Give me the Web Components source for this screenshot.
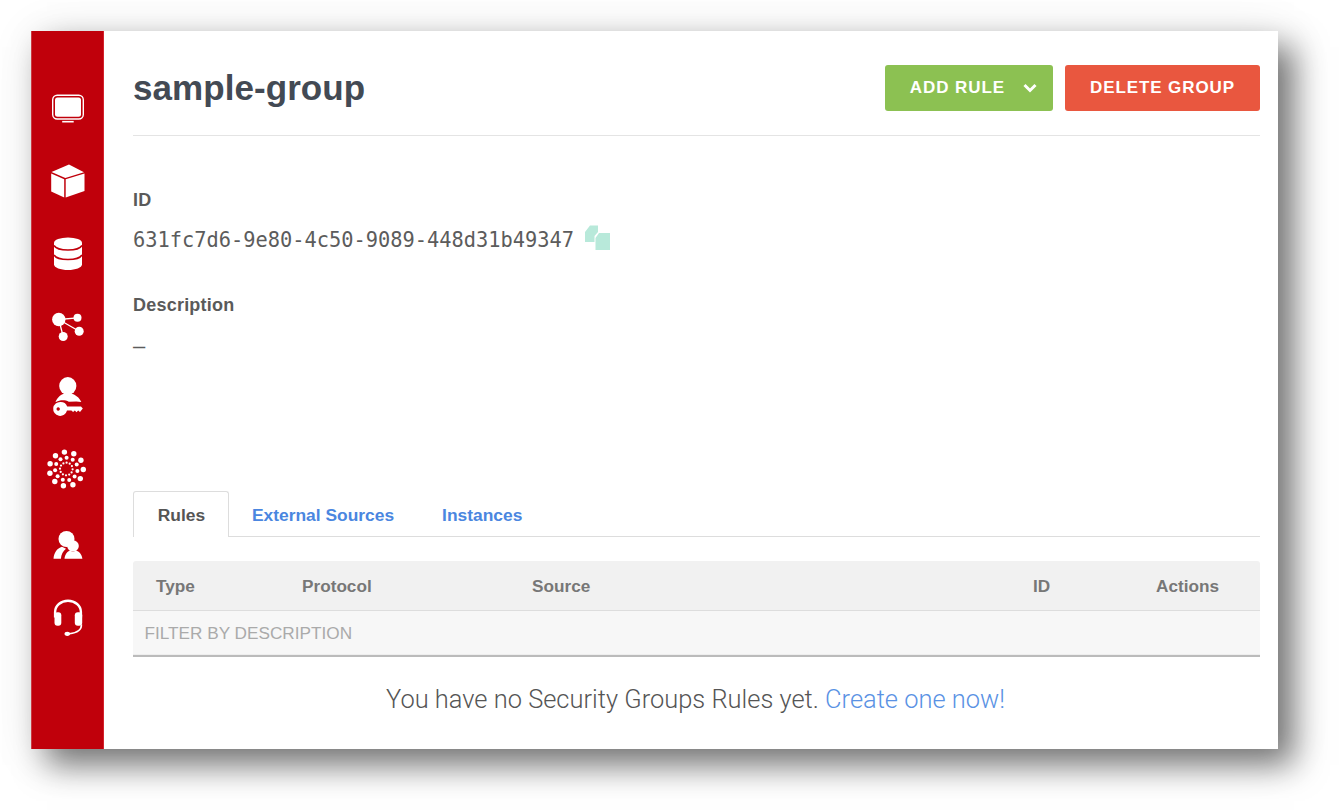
<!DOCTYPE html>
<html><head><meta charset="utf-8"><title>sample-group</title>
<style>
html,body{margin:0;padding:0;background:#fff}
body{font-family:"Liberation Sans",Arial,sans-serif;width:1340px;height:812px;overflow:hidden}
</style></head><body>
<app-window>
  <side-nav slot="nav"></side-nav>
  <page-header title-text="sample-group"></page-header>
  <info-field label="ID" mono copy>631fc7d6-9e80-4c50-9089-448d31b49347</info-field>
  <info-field label="Description" mono class="desc">–</info-field>
  <tab-bar></tab-bar>
  <rules-table></rules-table>
</app-window>
<script>
function shadow(el,html){el.attachShadow({mode:'open'}).innerHTML=html;}
customElements.define('app-window',class extends HTMLElement{constructor(){super();shadow(this,`<style>
:host{display:block;padding:31px 62px 63px 31px}
.win{display:flex;width:1247px;height:718px;background:#fff;box-shadow:16px 16px 30px rgba(0,0,0,.5),6px 6px 45px rgba(0,0,0,.12)}
.main{flex:1;min-width:0;padding:0 18px 0 29px;display:flex;flex-direction:column}
</style><div class="win"><slot name="nav"></slot><div class="main"><slot></slot></div></div>`);}});

const dots=(()=>{let s='';const cx=65.8,cy=468.5;
[[6.3,12,1.1,.1],[11.3,11,2,.3],[17,11,2.7,.05]].forEach(([r,n,d,o])=>{for(let i=0;i<n;i++){const a=(i+o)/n*2*Math.PI;
s+=`<circle cx="${(cx+r*Math.cos(a)).toFixed(1)}" cy="${(cy+r*Math.sin(a)).toFixed(1)}" r="${d}"/>`;}});return s;})();
const icons=[
[107.5,`<rect x="52.2" y="94.7" width="30.6" height="23.8" rx="4.5" fill="none" stroke="#fff" stroke-width="1.4"/><rect x="54.5" y="97" width="26" height="19.2" rx="2.5"/><rect x="61.700" y="120.4" width="11.5" height="1.6"/>`],
[180.5,`<path d="M68.5 164 83.5 171.7 64.8 177.6 51 171.6Z"/><path d="M50.7 173 63.7 178.7V197L50.7 191Z"/><path d="M65.2 178.8 84 172.9V190.6L65.2 197Z"/>`],
[253.5,`<ellipse cx="67.5" cy="242.5" rx="14" ry="5.500"/><path d="M53.500 242.500h28V264c0 3-6.500 5.500-14 5.500S53.500 267 53.500 264z"/><path d="M53.500 245c2 3.300 7.500 4.500 14 4.500s12-1.200 14-4.500M53.500 254.500c2 3.300 7.500 4.500 14 4.500s12-1.200 14-4.500" fill="none" stroke="#c0000b" stroke-width="1.500"/>`],
[326.5,`<circle cx="58.300" cy="319" r="6.700"/><circle cx="77" cy="317.300" r="4"/><circle cx="78.700" cy="330.700" r="4.500"/><circle cx="62.700" cy="336" r="4.500"/><path d="M58.300 319 77 317.300M58.300 319 78.700 330.700M58.300 319 62.700 336" stroke="#fff" stroke-width="1.300" fill="none"/>`],
[399.5,`<ellipse cx="67.300" cy="385.500" rx="8.600" ry="9"/><path d="M55 401.500c2-5 5.500-7.500 9-8.500h6.500c4 1 8.500 4 10.300 8.500l-5-.6-7.500.3c-3.500-1.800-8.800-2-12.800.300z"/><path fill-rule="evenodd" d="M60 401.500a7 7 0 0 1 6.700 4.400H80.500l1.800 2.200-2.800 3.400-1.800-1.400-1.700 1.600-1.700-1.600-1.700 1.500-1.700-1.500h-4.400a7 7 0 1 1-6.300-8.600zM57.700 406.800a1.700 1.700 0 1 0 .01 0z"/>`],
[472.5,dots],
[545.5,`<circle cx="66" cy="538.500" r="8"/><path d="M53 558.300c.5-6 3.500-10.500 8.500-12l4 2c-3 2.400-4.800 5.700-5.100 10z"/><circle cx="72.500" cy="545.500" r="5.800"/><path d="M64 558.300c.4-4.500 3-7.500 5.500-8.300l3 1.500 3-1.500c3 .8 6 3.800 6.400 8.300z"/>`],
[618.500,`<path d="M54.600 617v-5.500a12.900 11.300 0 0 1 25.800 0v5.500" fill="none" stroke="#fff" stroke-width="2.400"/><rect x="54" y="611.800" width="6.800" height="13.500" rx="3"/><rect x="74.300" y="611.800" width="7.400" height="13.500" rx="3"/><path d="M81 624c0 5.500-5 8.500-12 9.200" fill="none" stroke="#fff" stroke-width="1.500"/><ellipse cx="66.800" cy="633.300" rx="2.800" ry="2.100"/>`]
];
customElements.define('side-nav',class extends HTMLElement{constructor(){super();shadow(this,`<style>
:host{display:block;flex:none;width:73px;background:#c0000b;box-shadow:inset 1px 0 #cb3a42,inset -1px 0 #d4222c}
.list{display:flex;flex-direction:column;padding-top:40px}
.item{height:73px;display:flex;align-items:center;justify-content:center}
svg{width:40px;height:40px;fill:#fff;display:block;overflow:visible}
</style><nav class="list">${icons.map(([cy,b])=>`<div class="item"><svg viewBox="47.500 ${cy-20} 40 40">${b}</svg></div>`).join('')}</nav>`);}});

customElements.define('action-button',class extends HTMLElement{constructor(){super();shadow(this,`<style>
:host{display:inline-flex;align-items:center;height:46px;padding:0 25px;border-radius:3px;color:#fff;font:bold 17px "Liberation Sans",Arial,sans-serif;letter-spacing:.91px;background:var(--bg);white-space:nowrap;box-sizing:border-box}
svg{display:none;width:14px;height:10px;margin-left:18px;margin-right:-9px}
:host([menu]) svg{display:block}
</style><slot></slot><svg viewBox="0 0 14 10"><path d="M1.500 2 7 7.500 12.500 2" fill="none" stroke="#fff" stroke-width="3"/></svg>`);}});

customElements.define('page-header',class extends HTMLElement{constructor(){super();shadow(this,`<style>
:host{display:flex;align-items:center;justify-content:space-between;height:105px;box-sizing:border-box;padding-top:34px;padding-bottom:24px;border-bottom:1px solid #e4e4e4}
h1{margin:-2px 0 0;font:bold 35px/1 "Liberation Sans",Arial,sans-serif;color:#434a54;letter-spacing:.06px}
.btns{display:flex;gap:12px}
</style><h1>${this.getAttribute('title-text')}</h1><div class="btns"><action-button menu style="--bg:#8cc152">ADD RULE</action-button><action-button style="--bg:#e9573f">DELETE GROUP</action-button></div>`);}});

customElements.define('info-field',class extends HTMLElement{constructor(){super();const c=this.hasAttribute('copy');shadow(this,`<style>
:host{display:block;margin-top:54px;height:51px}
:host(.desc){margin-top:0;padding-top:54px;height:47px}
:host(.desc) .v{margin-top:19px}
.l{font:bold 18px/20px "Liberation Sans",Arial,sans-serif;color:#5a5a5a;letter-spacing:.22px}
.v{display:flex;align-items:center;margin-top:18px;height:24px;font:20.350px/24px "DejaVu Sans Mono",monospace;color:#5c5c5c;white-space:nowrap}
svg{width:26px;height:28px;margin-left:11px;margin-top:-2px;fill:#b8e9da;display:block}
</style><div class="l">${this.getAttribute('label')}</div><div class="v"><slot></slot>${c?'<svg viewBox="585 225 26 28"><path d="M590 225.500H598V232L594.500 236V242H585V232Z"/><path d="M599 233H610V250H595.500V238Z"/></svg>':''}</div>`);}});

customElements.define('tab-bar',class extends HTMLElement{constructor(){super();shadow(this,`<style>
:host{display:flex;margin-top:149px;height:46px;box-sizing:border-box;border-bottom:1px solid #ddd;font:bold 17.400px/48px "Liberation Sans",Arial,sans-serif;color:#4a86e0}
.t{padding:0 24px}
.a + .t{margin-left:-1px}
.a{color:#555;background:#fff;border:1px solid #ddd;border-bottom:0;border-radius:3px 3px 0 0;height:46px;box-sizing:border-box;line-height:46px;width:96px;text-align:center;padding:0 0 0 1px}
</style><div class="t a">Rules</div><div class="t">External Sources</div><div class="t">Instances</div>`);}});

customElements.define('rules-table',class extends HTMLElement{constructor(){super();shadow(this,`<style>
:host{display:block;margin-top:24px}
.h{display:grid;grid-template-columns:146px 230px 501px 123px 1fr;padding:1px 0 0 23px;height:50px;align-items:center;background:#f1f1f1;border-radius:3px 3px 0 0;box-sizing:border-box;border-bottom:1px solid #ddd;font:bold 17.200px "Liberation Sans",Arial,sans-serif;color:#777}
.f{height:46px;box-sizing:border-box;background:#f7f7f7;border-bottom:2px solid #bbb;box-shadow:inset 0 -1px #eee;padding-left:11.500px;font:17.200px/44px "Liberation Sans",Arial,sans-serif;color:#aaa}
.e{text-align:center;margin-top:29px;padding-right:2px;font:300 25.450px/26px Roboto,"Liberation Sans",sans-serif;color:#555}
.e span{color:#5a92e4}
</style><div class="h"><div>Type</div><div>Protocol</div><div>Source</div><div>ID</div><div>Actions</div></div><div class="f">FILTER BY DESCRIPTION</div><div class="e">You have no Security Groups Rules yet. <span>Create one now!</span></div>`);}});
</script></body></html>
